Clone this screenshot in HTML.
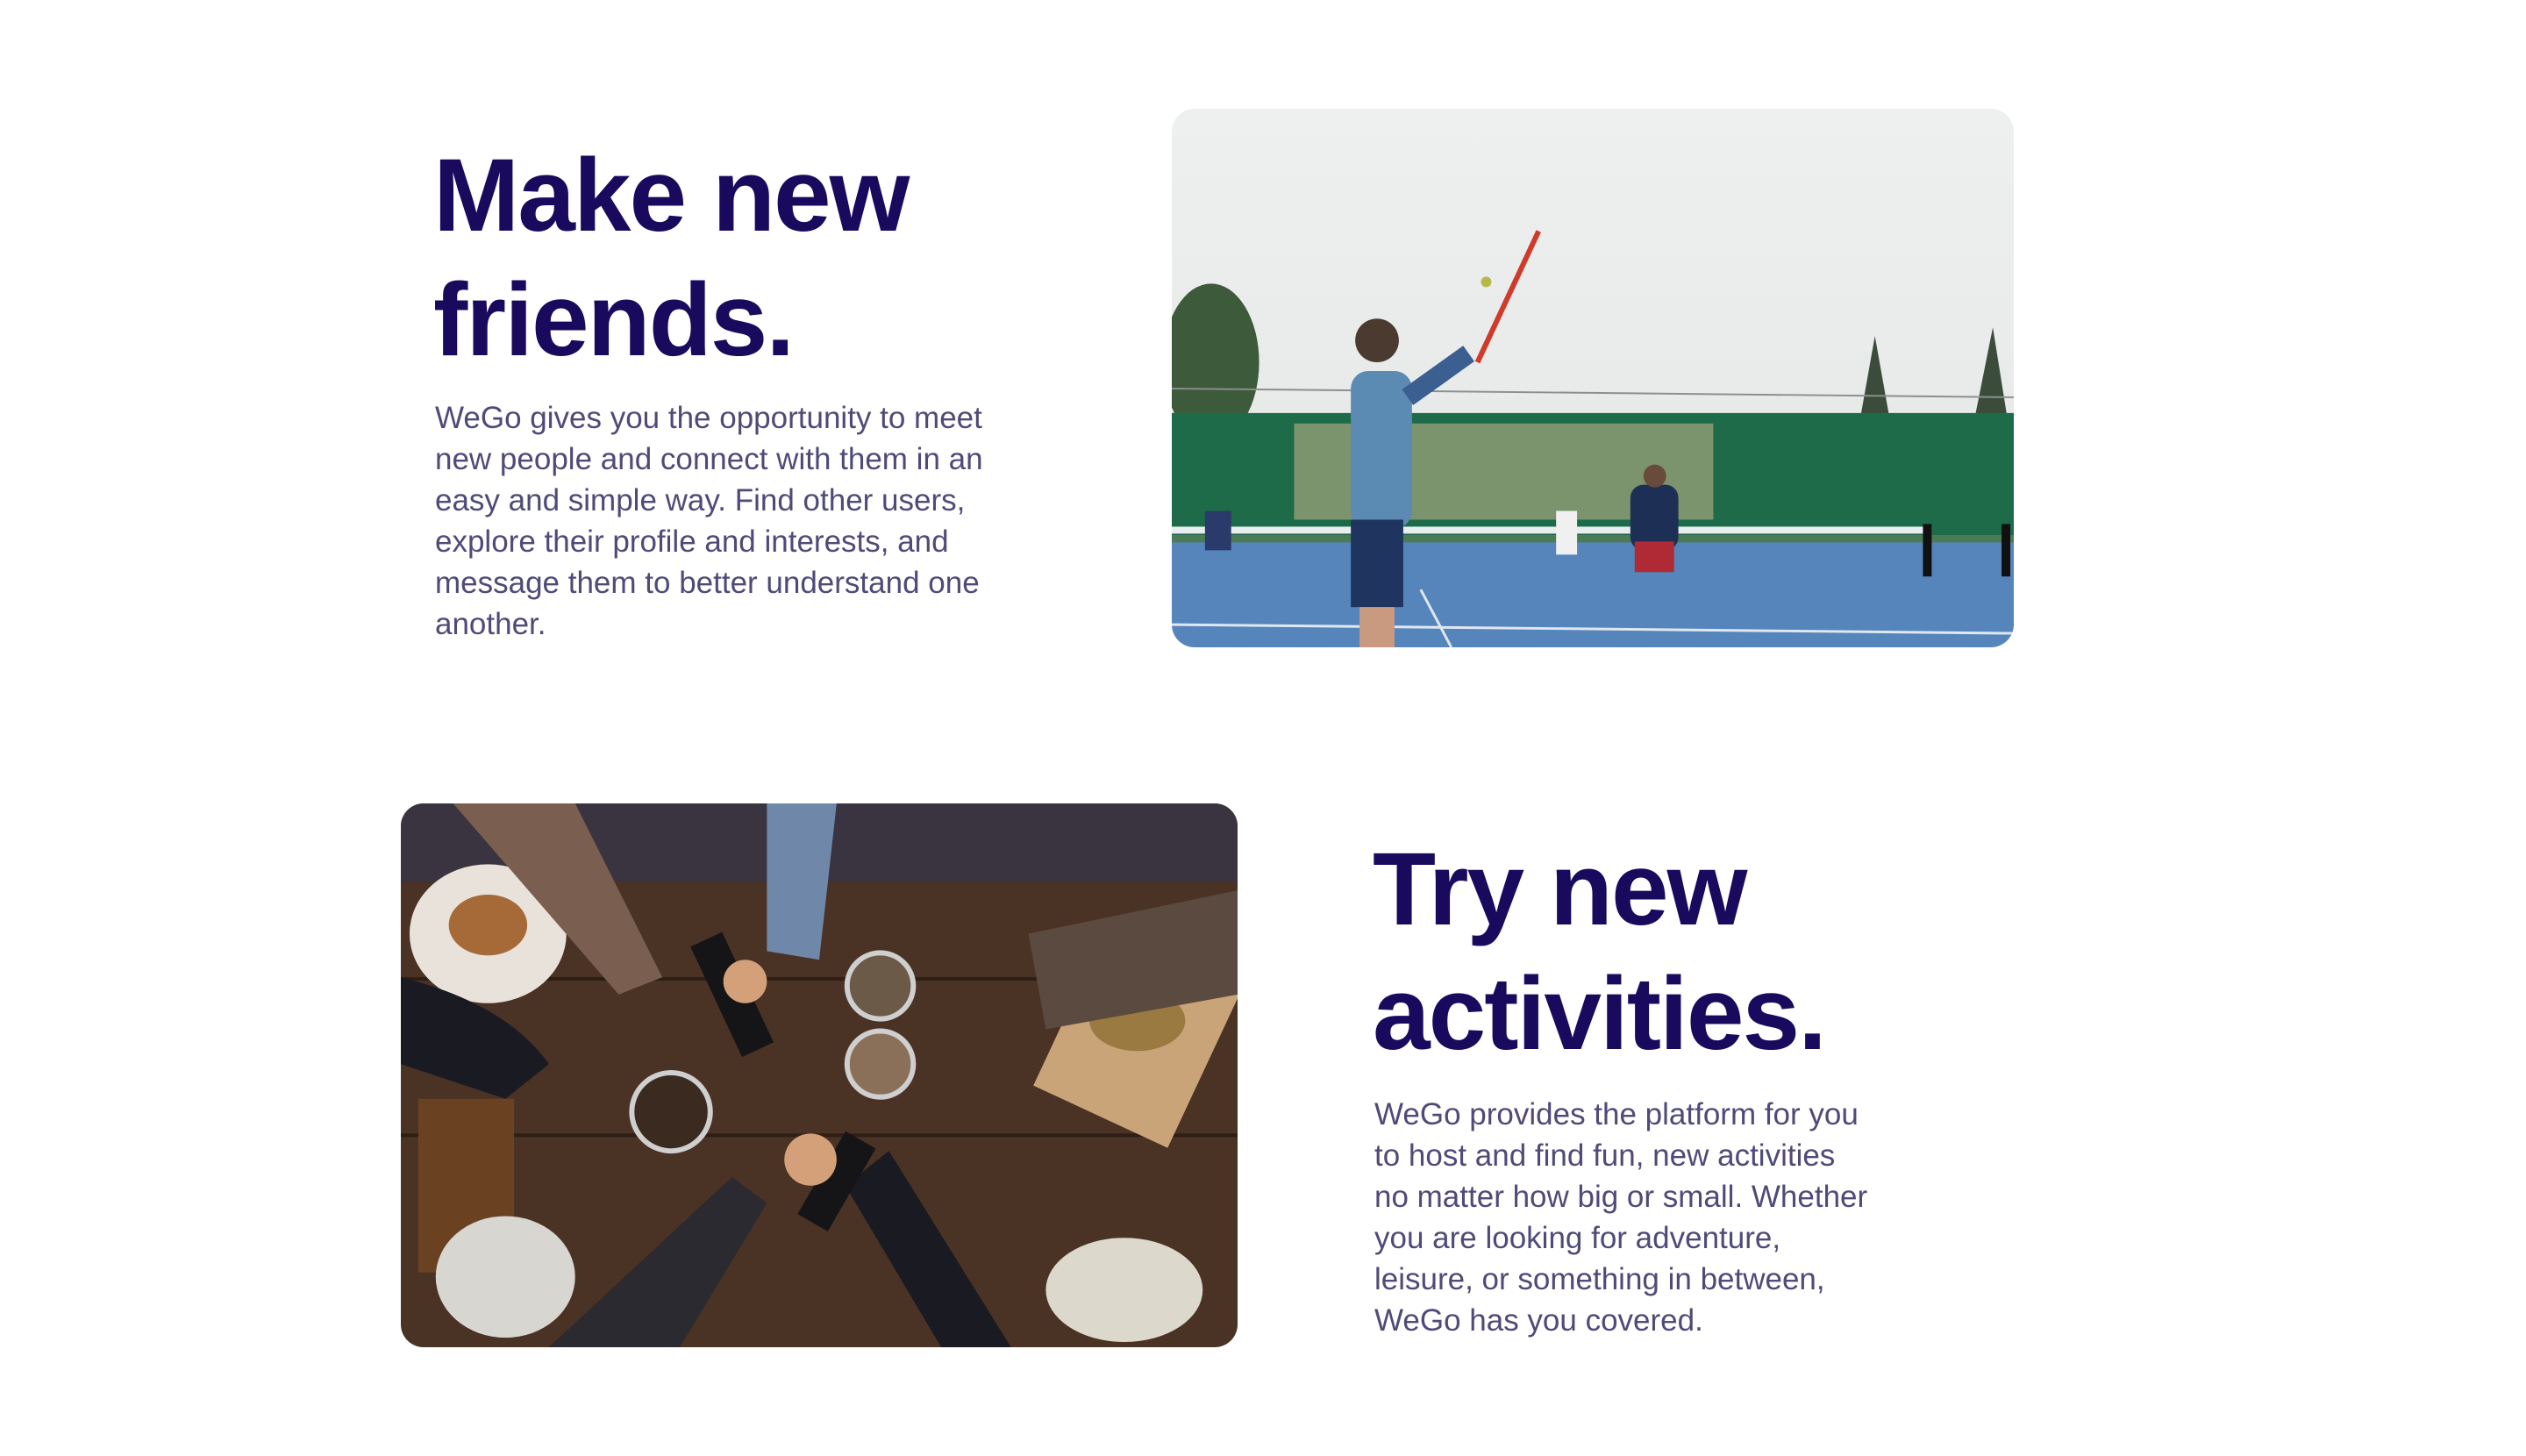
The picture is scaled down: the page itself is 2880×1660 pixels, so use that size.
<!DOCTYPE html>
<html><head><meta charset="utf-8"><style>
html,body{margin:0;padding:0;background:#fff;width:2880px;height:1660px;overflow:hidden;position:relative}
.h{position:absolute;font-family:"Liberation Sans",sans-serif;font-weight:700;color:#1a0a5e;font-size:118px;line-height:142px;letter-spacing:-2px;white-space:nowrap;margin:0}
.p{position:absolute;font-family:"Liberation Sans",sans-serif;color:#4f4a78;font-size:35px;line-height:47px;white-space:nowrap;margin:0}
.img{position:absolute;border-radius:26px;overflow:hidden}
</style></head><body>
<div class="h" style="left:494px;top:152px">Make new<br>friends.</div>
<div class="p" style="left:496px;top:453px">WeGo gives you the opportunity to meet<br>new people and connect with them in an<br>easy and simple way. Find other users,<br>explore their profile and interests, and<br>message them to better understand one<br>another.</div>

<div class="img" style="left:1336px;top:124px;width:960px;height:614px">
<svg width="960" height="614" viewBox="0 0 964 616" preserveAspectRatio="none">
<defs><linearGradient id="sky" x1="0" y1="0" x2="0" y2="1"><stop offset="0" stop-color="#eef0f0"/><stop offset="1" stop-color="#e4e6e6"/></linearGradient></defs>
<rect width="964" height="616" fill="url(#sky)"/>
<ellipse cx="45" cy="290" rx="55" ry="90" fill="#3d5a3a"/>
<polygon points="805,260 830,400 780,400" fill="#3b4d3a"/>
<polygon points="940,250 964,400 910,400" fill="#3b4d3a"/>
<rect x="0" y="348" width="964" height="140" fill="#1e6b4a"/>
<rect x="140" y="360" width="480" height="110" fill="#c9b78a" opacity="0.55"/>
<line x1="0" y1="320" x2="964" y2="330" stroke="#8a8f8f" stroke-width="2"/>
<rect x="0" y="488" width="964" height="10" fill="#4c7a55"/>
<rect x="0" y="496" width="964" height="120" fill="#5585bb"/>
<line x1="0" y1="590" x2="964" y2="600" stroke="#dfe8f0" stroke-width="3"/>
<line x1="285" y1="550" x2="320" y2="616" stroke="#dfe8f0" stroke-width="3"/>
<rect x="0" y="478" width="870" height="8" fill="#e8eef0"/>
<rect x="860" y="475" width="10" height="60" fill="#111"/>
<rect x="950" y="475" width="10" height="60" fill="#111"/>
<rect x="205" y="300" width="70" height="180" rx="20" fill="#5b8ab2"/>
<rect x="205" y="470" width="60" height="100" fill="#1f3560"/>
<rect x="215" y="570" width="40" height="46" fill="#c99a80"/>
<circle cx="235" cy="265" r="25" fill="#4a3a30"/>
<line x1="270" y1="330" x2="340" y2="280" stroke="#3a5f90" stroke-width="22"/>
<line x1="350" y1="290" x2="420" y2="140" stroke="#d03a2a" stroke-width="6"/>
<circle cx="360" cy="198" r="6" fill="#b6b84a"/>
<rect x="525" y="430" width="55" height="75" rx="15" fill="#1e2f55"/>
<rect x="530" y="495" width="45" height="35" fill="#b02a35"/>
<circle cx="553" cy="420" r="13" fill="#6a4a3a"/>
<rect x="38" y="460" width="30" height="45" fill="#2a3a6a"/>
<rect x="440" y="460" width="24" height="50" fill="#f0f0f0"/>
</svg></div>

<div class="img" style="left:457px;top:916px;width:954px;height:620px">
<svg width="954" height="620" viewBox="0 0 960 626" preserveAspectRatio="none">
<rect width="960" height="626" fill="#4a3224"/>
<rect x="0" y="0" width="960" height="90" fill="#3a3440"/>
<rect x="0" y="200" width="960" height="4" fill="#2e1e14"/>
<rect x="0" y="380" width="960" height="4" fill="#2e1e14"/>
<ellipse cx="100" cy="150" rx="90" ry="80" fill="#e8e2da"/>
<ellipse cx="100" cy="140" rx="45" ry="35" fill="#a66a38"/>
<rect x="760" y="170" width="170" height="200" transform="rotate(25 845 270)" fill="#c9a478"/>
<ellipse cx="845" cy="250" rx="55" ry="35" fill="#9a7a40"/>
<rect x="20" y="340" width="110" height="200" fill="#6a4222"/>
<ellipse cx="120" cy="545" rx="80" ry="70" fill="#d8d6d0"/>
<ellipse cx="830" cy="560" rx="90" ry="60" fill="#ddd8cc"/>
<path d="M0 200 Q120 230 170 300 L120 340 L0 300Z" fill="#1a1a22"/>
<path d="M60 0 L200 0 L300 200 L250 220Z" fill="#7a5e50"/>
<path d="M420 0 L500 0 L480 180 L420 170Z" fill="#6f88aa"/>
<path d="M960 100 L720 150 L740 260 L960 220Z" fill="#5a4a40"/>
<path d="M560 400 L700 626 L620 626 L510 440Z" fill="#1a1a22"/>
<path d="M420 460 L320 626 L170 626 L380 430Z" fill="#2a2a30"/>
<circle cx="550" cy="210" r="38" fill="#6b5a48" stroke="#cfcfcf" stroke-width="6"/>
<circle cx="550" cy="300" r="38" fill="#8a7058" stroke="#cfcfcf" stroke-width="6"/>
<circle cx="310" cy="355" r="45" fill="#3a2a20" stroke="#cfcfcf" stroke-width="6"/>
<rect x="360" y="150" width="40" height="140" transform="rotate(-25 380 220)" fill="#151518"/>
<rect x="480" y="380" width="40" height="110" transform="rotate(30 500 435)" fill="#151518"/>
<circle cx="470" cy="410" r="30" fill="#d4a07a"/>
<circle cx="395" cy="205" r="25" fill="#d4a07a"/>
</svg></div>

<div class="h" style="left:1565px;top:943px">Try new<br>activities.</div>
<div class="p" style="left:1567px;top:1247px">WeGo provides the platform for you<br>to host and find fun, new activities<br>no matter how big or small. Whether<br>you are looking for adventure,<br>leisure, or something in between,<br>WeGo has you covered.</div>
</body></html>
